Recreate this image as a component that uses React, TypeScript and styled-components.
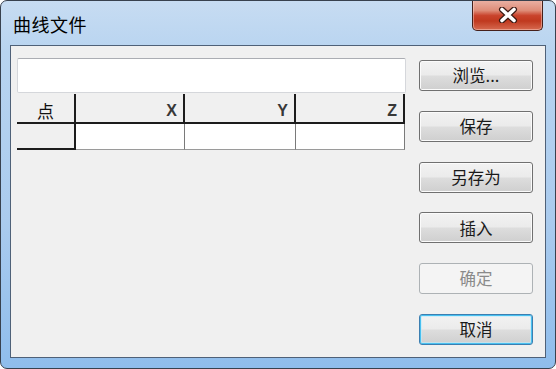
import React from 'react';
import styled, { createGlobalStyle } from 'styled-components';

const GlobalStyle = createGlobalStyle`
  html, body { margin: 0; padding: 0; background: #ffffff; }
  body { font-family: "Noto Sans CJK SC", "Noto Sans", sans-serif; }
  #root { width: 556px; height: 369px; }
`;

const Window = styled.div`
  box-sizing: border-box;
  width: 556px;
  height: 369px;
  border: 1px solid #38414e;
  border-radius: 7px;
  background: linear-gradient(180deg, #c7dcf2 0%, #b8d4f0 14%, #aacbee 60%, #8fbdec 100%);
  display: flex;
  flex-direction: column;
  padding: 0 9px 10px 9px;
  overflow: hidden;
`;

const TitleBar = styled.div`
  height: 44px;
  flex: none;
  display: flex;
  align-items: center;
  justify-content: space-between;
  padding: 0 3px;
`;

const Title = styled.div`
  font-family: "Noto Sans CJK SC", sans-serif;
  font-size: 18px;
  color: #000;
  letter-spacing: 0.5px;
  padding-top: 1px;
`;

const CloseButton = styled.div`
  align-self: flex-start;
  margin-top: -1px;
  box-sizing: border-box;
  width: 71px;
  height: 31px;
  border: 1px solid #46201a;
  border-top: none;
  border-radius: 0 0 5px 5px;
  background: linear-gradient(180deg, #eab3a6 0%, #de8c78 35%, #c9432c 52%, #c0391f 70%, #d66a50 100%);
  box-shadow: inset 0 0 0 1px rgba(255, 220, 210, 0.45);
  display: flex;
  align-items: center;
  justify-content: center;
`;

const Client = styled.div`
  flex: 1;
  box-sizing: border-box;
  border: 1px solid #4f6178;
  background: #f0f0f0;
  display: flex;
  gap: 13px;
  padding: 12px 12px 0 6px;
`;

const LeftPane = styled.div`
  width: 389px;
  display: flex;
  flex-direction: column;
  gap: 1px;
`;

const PathBox = styled.div`
  box-sizing: border-box;
  height: 35px;
  background: #ffffff;
  border: 1px solid #d5d7db;
  border-top-color: #abadb3;
  border-radius: 2px;
`;

const Grid = styled.div`
  display: grid;
  grid-template-columns: 59px 109px 111px 109px;
  grid-template-rows: 30px 26px;
`;

const HeadCell = styled.div<{ $center?: boolean }>`
  box-sizing: border-box;
  border-right: 2px solid #1c1c1c;
  border-bottom: 2px solid #1c1c1c;
  background: #f0f0f0;
  display: flex;
  align-items: flex-end;
  justify-content: ${p => (p.$center ? 'center' : 'flex-end')};
  padding: 0 ${p => (p.$center ? '0' : '6px')} 2px 0;
  font-family: ${p => (p.$center ? '"Noto Sans CJK SC", sans-serif' : '"Liberation Sans", sans-serif')};
  font-size: ${p => (p.$center ? '17px' : '16px')};
  font-weight: ${p => (p.$center ? 400 : 600)};
  line-height: 18px;
  color: ${p => (p.$center ? '#111' : '#383838')};
`;

const RowCell = styled.div<{ $fixed?: boolean }>`
  box-sizing: border-box;
  background: ${p => (p.$fixed ? '#f0f0f0' : '#ffffff')};
  border-right: ${p => (p.$fixed ? '2px solid #1c1c1c' : '1px solid #7a7a7a')};
  border-bottom: ${p => (p.$fixed ? '2px solid #1c1c1c' : '1px solid #9a9a9a')};
`;

const ButtonColumn = styled.div`
  display: flex;
  flex-direction: column;
  gap: 19.8px;
  padding-top: 2px;
`;

const Button = styled.button<{ $default?: boolean }>`
  box-sizing: border-box;
  width: 114px;
  height: 31px;
  margin: 0;
  padding: 0;
  border-radius: 3px;
  font-family: "Noto Sans CJK SC", sans-serif;
  font-size: 16.5px;
  line-height: 1;
  color: #1a1a1a;
  border: 1px solid ${p => (p.$default ? '#3c7fb1' : '#707070')};
  background: linear-gradient(180deg, #f2f2f2 0%, #ebebeb 48%, #dddddd 52%, #cfcfcf 100%);
  box-shadow: ${p =>
    p.$default
      ? 'inset 0 0 0 1px #48c0f0, inset 0 0 0 2px rgba(190,235,252,0.6)'
      : 'inset 0 0 0 1px #fbfbfb'};
  cursor: default;

  &:disabled {
    border-color: #adb2b5;
    background: #f4f4f4;
    color: #8a8a8a;
    box-shadow: none;
  }
`;

const CloseGlyph = () => (
  <svg width="20" height="16" viewBox="0 0 20 16">
    <path d="M4 2.5 L16 13.5 M16 2.5 L4 13.5" stroke="#3a1a14" strokeWidth="6" strokeLinecap="round" />
    <path d="M4 2.5 L16 13.5 M16 2.5 L4 13.5" stroke="#ffffff" strokeWidth="3.6" strokeLinecap="round" />
  </svg>
);

export default function App() {
  return (
    <>
      <GlobalStyle />
      <Window>
        <TitleBar>
          <Title>曲线文件</Title>
          <CloseButton>
            <CloseGlyph />
          </CloseButton>
        </TitleBar>
        <Client>
          <LeftPane>
            <PathBox />
            <Grid>
              <HeadCell $center>点</HeadCell>
              <HeadCell>X</HeadCell>
              <HeadCell>Y</HeadCell>
              <HeadCell>Z</HeadCell>
              <RowCell $fixed />
              <RowCell />
              <RowCell />
              <RowCell />
            </Grid>
          </LeftPane>
          <ButtonColumn>
            <Button>浏览...</Button>
            <Button>保存</Button>
            <Button>另存为</Button>
            <Button>插入</Button>
            <Button disabled>确定</Button>
            <Button $default>取消</Button>
          </ButtonColumn>
        </Client>
      </Window>
    </>
  );
}
